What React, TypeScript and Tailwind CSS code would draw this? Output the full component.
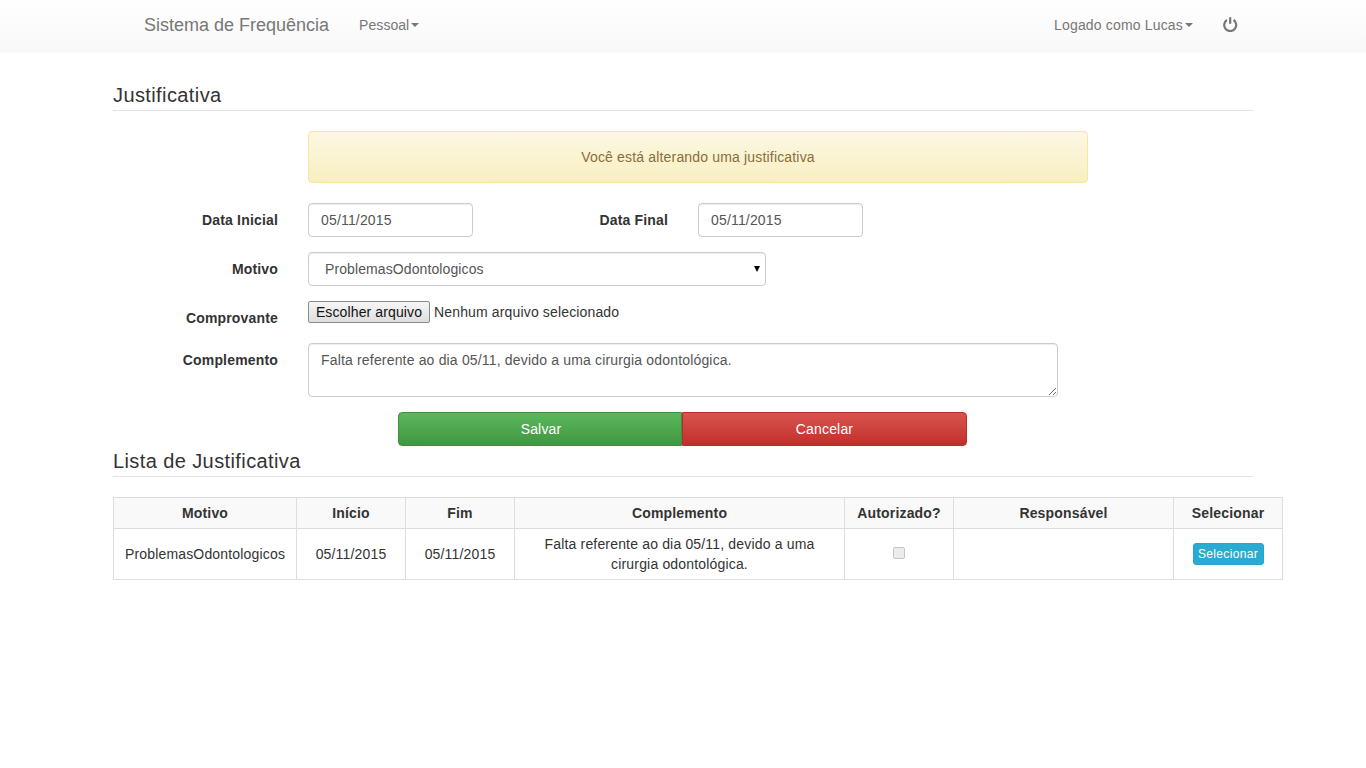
import React from 'react';

const Caret = () => (
  <span className="inline-block ml-[2px] align-middle w-0 h-0 border-x-4 border-x-transparent border-t-4 border-t-[#777]" />
);

const PowerIcon = () => (
  <svg width="15" height="15" viewBox="0 0 15 15" fill="none" stroke="#777" strokeWidth="2.2" className="-mt-[2px]">
    <path d="M3.9 3a6 6 0 1 0 6.6 0" />
    <path d="M7.2 0.2v6.6" />
  </svg>
);

const SectionTitle = ({ children, className }: { children: React.ReactNode; className: string }) => (
  <h2 className={`text-[20px] leading-[22px] tracking-[0.4px] text-[#333] pb-[4px] border-b border-[#e3e3e3] ${className}`}>
    {children}
  </h2>
);

const FieldLabel = ({ children, className = 'w-[165px]' }: { children: React.ReactNode; className?: string }) => (
  <label className={`font-bold text-[14px] text-[#333] text-right shrink-0 ${className}`}>{children}</label>
);

const inputClass =
  'h-[34px] w-[165px] px-[12px] text-[14px] tracking-[0.17px] text-[#555] bg-white border border-[#ccc] rounded-[4px] shadow-[inset_0_1px_1px_rgba(0,0,0,0.075)] outline-none';

const headers = [
  { label: 'Motivo', cls: 'w-[183px]' },
  { label: 'Início', cls: 'w-[109px]' },
  { label: 'Fim', cls: 'w-[109px]' },
  { label: 'Complemento', cls: 'w-[330px]' },
  { label: 'Autorizado?', cls: 'w-[109px]' },
  { label: 'Responsável', cls: 'w-[220px]' },
  { label: 'Selecionar', cls: 'w-[109px]' },
];

const cellClass = 'border border-[#ddd] px-[8px] py-[5px] text-center align-middle leading-[20px]';

export default function App() {
  return (
    <div className="min-h-[768px] bg-white text-[14px] tracking-[0.17px] text-[#333] font-['Liberation_Sans',Arial,sans-serif]">
      <nav className="h-[51px] flex items-center pb-[1px] pl-[144px] pr-[128px] bg-gradient-to-b from-white to-[#f8f8f8] shadow-[0_1px_3px_rgba(0,0,0,0.05)] text-[#777]">
        <a className="text-[18px] leading-[20px] tracking-normal">Sistema de Frequência</a>
        <a className="ml-[30px] flex items-center tracking-[0.05px]">
          Pessoal
          <Caret />
        </a>
        <a className="ml-auto flex items-center">
          Logado como Lucas
          <Caret />
        </a>
        <a className="ml-[30px] flex items-center">
          <PowerIcon />
        </a>
      </nav>

      <main className="w-[1140px] mx-auto">
        <SectionTitle className="mt-[33px]">Justificativa</SectionTitle>

        <div className="ml-[195px] mt-[20px] w-[780px] h-[52px] flex items-center justify-center text-[#8a6d3b] rounded-[4px] border border-[#f5e79e] bg-gradient-to-b from-[#fcf8e3] to-[#f8efc0]">
          Você está alterando uma justificativa
        </div>

        <div className="mt-[20px] flex items-center">
          <FieldLabel>Data Inicial</FieldLabel>
          <input className={`${inputClass} ml-[30px]`} defaultValue="05/11/2015" />
          <FieldLabel className="w-[195px]">Data Final</FieldLabel>
          <input className={`${inputClass} ml-[30px]`} defaultValue="05/11/2015" />
        </div>

        <div className="mt-[15px] flex items-center">
          <FieldLabel>Motivo</FieldLabel>
          <div className="relative ml-[30px] w-[458px]">
            <select className="appearance-none w-full h-[34px] pl-[16px] pr-[24px] text-[14px] tracking-[0.1px] text-[#555] bg-white border border-[#ccc] rounded-[4px] shadow-[inset_0_1px_1px_rgba(0,0,0,0.075)] outline-none">
              <option>ProblemasOdontologicos</option>
            </select>
            <span className="absolute right-[6px] top-[14px] w-0 h-0 border-x-[3.5px] border-x-transparent border-t-[6px] border-t-black" />
          </div>
        </div>

        <div className="mt-[15px] flex items-start">
          <FieldLabel className="w-[165px] pt-[7px] leading-[20px]">Comprovante</FieldLabel>
          <div className="ml-[30px] flex items-center h-[22px]">
            <button className="h-[22px] w-[122px] text-[14px] tracking-[0.12px] text-[#111] border border-[#8a8a8a] rounded-[2px] bg-gradient-to-b from-[#f6f6f6] to-[#dedede]">
              Escolher arquivo
            </button>
            <span className="ml-[4px] tracking-[0.15px]">Nenhum arquivo selecionado</span>
          </div>
        </div>

        <div className="mt-[15px] flex items-start">
          <FieldLabel className="w-[165px] pt-[7px] leading-[20px]">Complemento</FieldLabel>
          <textarea
            className="ml-[30px] block w-[750px] h-[54px] px-[12px] py-[6px] leading-[20px] text-[14px] tracking-[0.17px] text-[#555] bg-white border border-[#ccc] rounded-[4px] shadow-[inset_0_1px_1px_rgba(0,0,0,0.075)] outline-none"
            defaultValue="Falta referente ao dia 05/11, devido a uma cirurgia odontológica."
          />
        </div>

        <div className="mt-[15px] ml-[285px] flex">
          <button className="w-[284px] h-[34px] pl-[2px] text-white rounded-l-[4px] border border-[#3e8f3e] bg-gradient-to-b from-[#5cb85c] to-[#419641]">
            Salvar
          </button>
          <button className="w-[285px] h-[34px] text-white rounded-r-[4px] border border-[#b92c28] bg-gradient-to-b from-[#d9534f] to-[#c12e2a]">
            Cancelar
          </button>
        </div>

        <SectionTitle className="mt-[4px]">Lista de Justificativa</SectionTitle>

        <table className="mt-[20px] w-[1169px] table-fixed border-collapse">
          <thead>
            <tr className="bg-[#f9f9f9]">
              {headers.map((h) => (
                <th key={h.label} className={`${cellClass} ${h.cls} font-bold`}>
                  {h.label}
                </th>
              ))}
            </tr>
          </thead>
          <tbody>
            <tr>
              <td className={cellClass}>ProblemasOdontologicos</td>
              <td className={cellClass}>05/11/2015</td>
              <td className={cellClass}>05/11/2015</td>
              <td className={cellClass}>Falta referente ao dia 05/11, devido a uma cirurgia odontológica.</td>
              <td className={cellClass}>
                <input
                  type="checkbox"
                  disabled
                  className="appearance-none align-middle w-[12px] h-[12px] mb-[4px] bg-[#ececec] border border-[#c4c4c4] rounded-[2px]"
                />
              </td>
              <td className={cellClass}></td>
              <td className={cellClass}>
                <button className="h-[22px] w-[71px] text-[12px] tracking-[0.35px] text-white rounded-[3px] border border-[#28a4c9] bg-gradient-to-b from-[#2aabd2] to-[#2aabd2] align-middle">
                  Selecionar
                </button>
              </td>
            </tr>
          </tbody>
        </table>
      </main>
    </div>
  );
}
